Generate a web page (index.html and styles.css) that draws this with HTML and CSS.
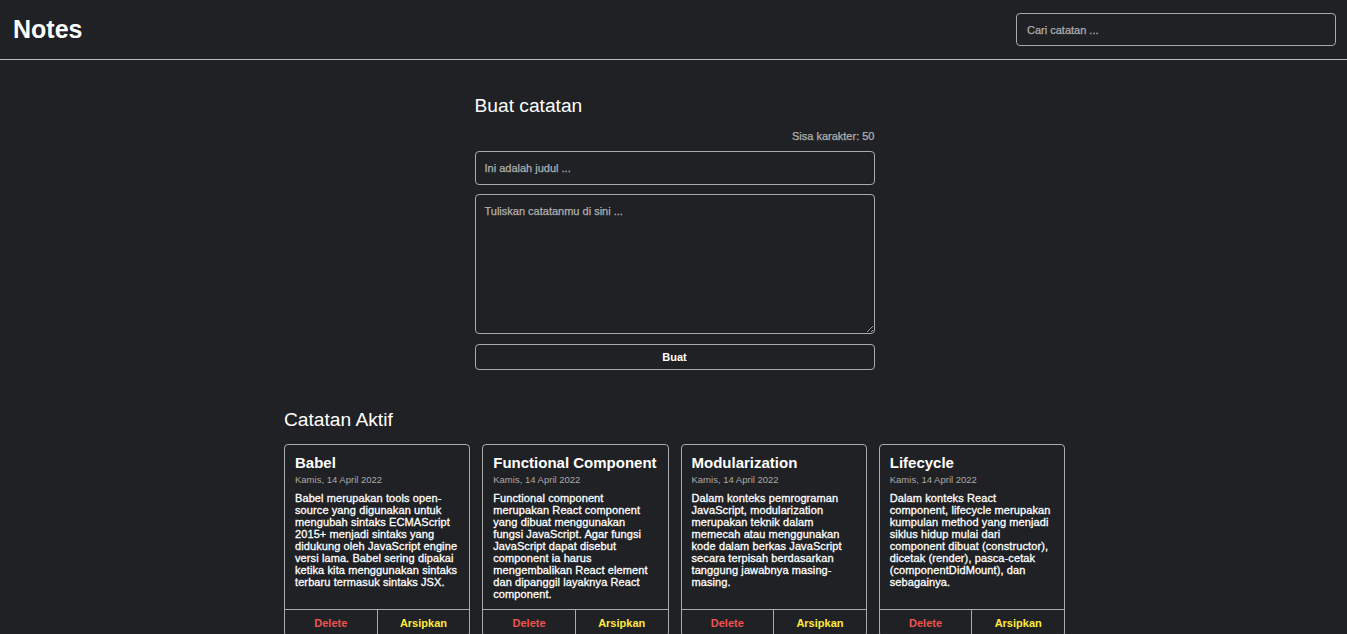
FILE: index.html
```html
<!DOCTYPE html>
<html lang="id">
<head>
<meta charset="utf-8">
<title>Notes</title>
<link rel="stylesheet" href="styles.css">
</head>
<body>
<header class="app-header">
  <h1 class="brand">Notes</h1>
  <input class="search" type="text" placeholder="Cari catatan ...">
</header>
<main class="app-body">
  <section class="note-input">
    <h2 class="section-title">Buat catatan</h2>
    <form class="note-form">
      <p class="char-limit">Sisa karakter: 50</p>
      <input class="field field-title" type="text" placeholder="Ini adalah judul ...">
      <textarea class="field field-body" placeholder="Tuliskan catatanmu di sini ..."></textarea>
      <button class="submit" type="button">Buat</button>
    </form>
  </section>
  <section class="notes">
    <h2 class="section-title">Catatan Aktif</h2>
    <div class="notes-list">
      <article class="note">
        <div class="note-content">
          <h3 class="note-title">Babel</h3>
          <p class="note-date">Kamis, 14 April 2022</p>
          <p class="note-text">Babel merupakan tools open-source yang digunakan untuk mengubah sintaks ECMAScript 2015+ menjadi sintaks yang didukung oleh JavaScript engine versi lama. Babel sering dipakai ketika kita menggunakan sintaks terbaru termasuk sintaks JSX.</p>
        </div>
        <div class="note-actions">
          <button class="action delete" type="button">Delete</button>
          <button class="action archive" type="button">Arsipkan</button>
        </div>
      </article>
      <article class="note">
        <div class="note-content">
          <h3 class="note-title">Functional Component</h3>
          <p class="note-date">Kamis, 14 April 2022</p>
          <p class="note-text">Functional component merupakan React component yang dibuat menggunakan fungsi JavaScript. Agar fungsi JavaScript dapat disebut component ia harus mengembalikan React element dan dipanggil layaknya React component.</p>
        </div>
        <div class="note-actions">
          <button class="action delete" type="button">Delete</button>
          <button class="action archive" type="button">Arsipkan</button>
        </div>
      </article>
      <article class="note">
        <div class="note-content">
          <h3 class="note-title">Modularization</h3>
          <p class="note-date">Kamis, 14 April 2022</p>
          <p class="note-text">Dalam konteks pemrograman JavaScript, modularization merupakan teknik dalam memecah atau menggunakan kode dalam berkas JavaScript secara terpisah berdasarkan tanggung jawabnya masing-masing.</p>
        </div>
        <div class="note-actions">
          <button class="action delete" type="button">Delete</button>
          <button class="action archive" type="button">Arsipkan</button>
        </div>
      </article>
      <article class="note">
        <div class="note-content">
          <h3 class="note-title">Lifecycle</h3>
          <p class="note-date">Kamis, 14 April 2022</p>
          <p class="note-text">Dalam konteks React component, lifecycle merupakan kumpulan method yang menjadi siklus hidup mulai dari component dibuat (constructor), dicetak (render), pasca-cetak (componentDidMount), dan sebagainya.</p>
        </div>
        <div class="note-actions">
          <button class="action delete" type="button">Delete</button>
          <button class="action archive" type="button">Arsipkan</button>
        </div>
      </article>
    </div>
  </section>
</main>
</body>
</html>
```
FILE: styles.css
```css
* { box-sizing: border-box; }

html, body {
  margin: 0;
  background: #202124;
  color: #ffffff;
  font-family: "Liberation Sans", Arial, sans-serif;
  font-size: 11px;
}

.app-header {
  height: 60px;
  display: flex;
  align-items: center;
  justify-content: space-between;
  padding: 0 11px 0 13px;
  border-bottom: 1px solid #bdbdbd;
}

.brand {
  margin: 0;
  font-size: 25px;
  font-weight: bold;
  line-height: 1;
}

.search {
  width: 320px;
  height: 33px;
  background: transparent;
  border: 1px solid #aaaaaa;
  border-radius: 4px;
  padding: 0 10px;
  color: #ffffff;
  font-family: inherit;
  font-size: 11px;
  outline: none;
}

.search::placeholder,
.field::placeholder {
  color: #b0b0b0;
  opacity: 1;
  -webkit-text-stroke: 0.25px #b0b0b0;
}

.app-body {
  padding-left: 2px;
}

.note-input {
  width: 400px;
  margin: 0 auto;
  padding-top: 35px;
}

.section-title {
  margin: 0;
  font-size: 19.2px;
  font-weight: normal;
}

.note-form {
  display: flex;
  flex-direction: column;
}

.char-limit {
  margin: 13px 0 9px;
  text-align: right;
  color: #b0b0b0;
  -webkit-text-stroke: 0.25px #b0b0b0;
}

.field {
  width: 100%;
  background: transparent;
  border: 1px solid #aaaaaa;
  border-radius: 4px;
  color: #ffffff;
  font-family: inherit;
  font-size: 11px;
  outline: none;
}

.field-title {
  height: 34px;
  padding: 0 9px;
}

.field-body {
  height: 140px;
  margin-top: 9px;
  padding: 10px 9px;
  resize: vertical;
}

.submit {
  margin-top: 10px;
  height: 26px;
  background: transparent;
  border: 1px solid #aaaaaa;
  border-radius: 4px;
  color: #ffffff;
  font-family: inherit;
  font-size: 11px;
  font-weight: bold;
}

.notes {
  width: 781px;
  margin: 39px auto 0;
}

.notes-list {
  margin-top: 13px;
  display: grid;
  grid-template-columns: repeat(4, 1fr);
  gap: 12px;
}

.note {
  display: flex;
  flex-direction: column;
  border: 1px solid #aaaaaa;
  border-radius: 4px;
}

.note-content {
  flex: 1;
  padding: 9px 10px 9px;
}

.note-title {
  margin: 0;
  font-size: 15px;
  font-weight: bold;
}

.note-date {
  margin: 3px 0 0;
  font-size: 9.5px;
  color: #aaaaaa;
}

.note-text {
  margin: 7px 0 0;
  font-size: 11px;
  line-height: 12px;
  letter-spacing: 0.1px;
  -webkit-text-stroke: 0.3px #ffffff;
}

.note-actions {
  display: flex;
  border-top: 1px solid #aaaaaa;
}

.action {
  flex: 1;
  height: 26px;
  background: transparent;
  border: 0;
  font-family: inherit;
  font-size: 11px;
  font-weight: bold;
}

.action + .action {
  border-left: 1px solid #aaaaaa;
}

.delete { color: #ef5350; }
.archive { color: #ffeb3b; }
```
